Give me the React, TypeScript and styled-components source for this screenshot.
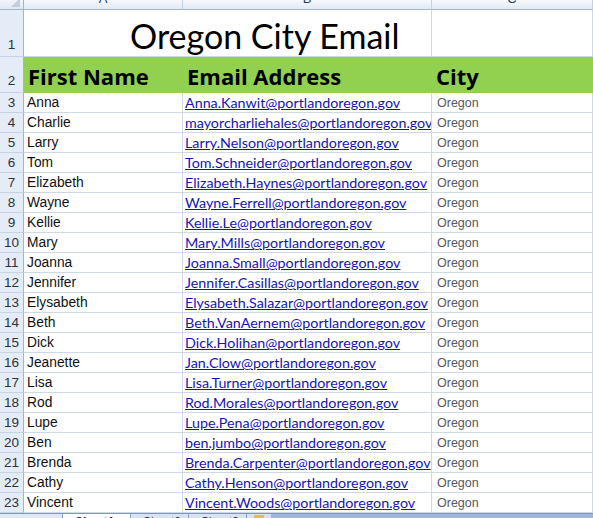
import React from 'react';
import styled, { createGlobalStyle } from 'styled-components';

const GlobalStyle = createGlobalStyle`
  html, body {
    margin: 0;
    padding: 0;
    background: #ffffff;
    overflow: hidden;
  }
`;

const rows: { name: string; email: string }[] = [
  { name: 'Anna', email: 'Anna.Kanwit@portlandoregon.gov' },
  { name: 'Charlie', email: 'mayorcharliehales@portlandoregon.gov' },
  { name: 'Larry', email: 'Larry.Nelson@portlandoregon.gov' },
  { name: 'Tom', email: 'Tom.Schneider@portlandoregon.gov' },
  { name: 'Elizabeth', email: 'Elizabeth.Haynes@portlandoregon.gov' },
  { name: 'Wayne', email: 'Wayne.Ferrell@portlandoregon.gov' },
  { name: 'Kellie', email: 'Kellie.Le@portlandoregon.gov' },
  { name: 'Mary', email: 'Mary.Mills@portlandoregon.gov' },
  { name: 'Joanna', email: 'Joanna.Small@portlandoregon.gov' },
  { name: 'Jennifer', email: 'Jennifer.Casillas@portlandoregon.gov' },
  { name: 'Elysabeth', email: 'Elysabeth.Salazar@portlandoregon.gov' },
  { name: 'Beth', email: 'Beth.VanAernem@portlandoregon.gov' },
  { name: 'Dick', email: 'Dick.Holihan@portlandoregon.gov' },
  { name: 'Jeanette', email: 'Jan.Clow@portlandoregon.gov' },
  { name: 'Lisa', email: 'Lisa.Turner@portlandoregon.gov' },
  { name: 'Rod', email: 'Rod.Morales@portlandoregon.gov' },
  { name: 'Lupe', email: 'Lupe.Pena@portlandoregon.gov' },
  { name: 'Ben', email: 'ben.jumbo@portlandoregon.gov' },
  { name: 'Brenda', email: 'Brenda.Carpenter@portlandoregon.gov' },
  { name: 'Cathy', email: 'Cathy.Henson@portlandoregon.gov' },
  { name: 'Vincent', email: 'Vincent.Woods@portlandoregon.gov' },
];

const Workbook = styled.div`
  width: 593px;
  height: 518px;
  display: flex;
  flex-direction: column;
  overflow: hidden;
`;

const Sheet = styled.div`
  display: grid;
  grid-template-columns: 24px 159px 249px 1fr;
  grid-template-rows: 10px 47px 36px repeat(21, 20px);
`;

const Corner = styled.div`
  position: relative;
  background: linear-gradient(#f3f6fa, #dfe7f1);
  border-right: 1px solid #9eb6ce;
  border-bottom: 1px solid #9eb6ce;
  box-sizing: border-box;
  overflow: hidden;

  &::after {
    content: '';
    position: absolute;
    right: 3px;
    bottom: 2px;
    border-left: 9px solid transparent;
    border-bottom: 9px solid #c4cfdd;
  }
`;

const ColHead = styled.div`
  background: linear-gradient(#f7f9fc, #e2e9f2);
  border-right: 1px solid #c5d2e2;
  border-bottom: 1px solid #9eb6ce;
  box-sizing: border-box;
  overflow: hidden;
  font-family: 'Liberation Sans', Arial, sans-serif;
  font-size: 13px;
  color: #27415f;
  text-align: center;
  line-height: 18px;

  span {
    display: block;
    margin-top: -10px;
  }
`;

const RowNum = styled.div<{ $bottom?: boolean }>`
  background: #e4ecf7;
  border-right: 1px solid #9eb6ce;
  border-bottom: 1px solid #c5d3e4;
  box-sizing: border-box;
  display: flex;
  justify-content: center;
  align-items: ${p => (p.$bottom ? 'flex-end' : 'center')};
  padding-bottom: ${p => (p.$bottom ? '4px' : '0')};
  font-family: 'Liberation Sans', Arial, sans-serif;
  font-size: 13.5px;
  color: #2b3340;
`;

const Cell = styled.div<{ $fill?: string; $span?: number }>`
  grid-column: span ${p => p.$span ?? 1};
  background: ${p => p.$fill ?? '#ffffff'};
  border-right: 1px solid ${p => p.$fill ?? '#d0d7e5'};
  border-bottom: 1px solid ${p => p.$fill ?? '#d0d7e5'};
  box-sizing: border-box;
  display: flex;
  align-items: center;
  overflow: hidden;
  white-space: nowrap;
  padding-left: 3px;
`;

const Title = styled.div`
  padding-left: 103px;
  padding-top: 4px;
  font-family: Lato, 'Open Sans', sans-serif;
  font-size: 34px;
  color: #000000;
`;

const HeaderText = styled.div`
  padding-left: 1px;
  padding-top: 3px;
  font-family: 'Open Sans', Lato, sans-serif;
  font-weight: 700;
  font-size: 22px;
  color: #000000;
`;

const Name = styled.span`
  font-family: 'Liberation Sans', Arial, sans-serif;
  font-size: 13.8px;
  color: #111111;
`;

const Email = styled.span`
  font-family: Lato, 'Open Sans', sans-serif;
  font-size: 14.3px;
  color: #1515b4;
  text-decoration: underline;
  margin-left: -1px;
`;

const City = styled.span`
  font-family: 'Liberation Sans', Arial, sans-serif;
  font-size: 12.5px;
  color: #555a60;
  padding-left: 2px;
`;

const TabStrip = styled.div`
  height: 5px;
  display: flex;
  overflow: hidden;
  background: #9fb6d6;
  border-top: 1px solid #7d97bd;
  box-sizing: border-box;
`;

const NavButtons = styled.div`
  width: 58px;
  display: flex;
  gap: 4px;
  padding: 1px 0 0 4px;
  background: #dfe8f4;
  font-family: 'Liberation Sans', Arial, sans-serif;
  font-size: 11px;
  color: #2a3f5f;
  line-height: 12px;
`;

const SheetTab = styled.div<{ $active?: boolean }>`
  width: ${p => (p.$active ? '68px' : '58px')};
  background: ${p => (p.$active ? '#ffffff' : '#d8e3f1')};
  border-left: 1px solid #8aa2c4;
  padding: 1px 0 0 12px;
  box-sizing: border-box;
  font-family: 'Liberation Sans', Arial, sans-serif;
  font-size: 12px;
  font-weight: ${p => (p.$active ? 700 : 400)};
  color: #1e2d44;
  line-height: 14px;
`;

const NewSheet = styled.div`
  width: 24px;
  background: #d8e3f1;
  border-left: 1px solid #8aa2c4;
  display: flex;
  justify-content: center;
  padding-top: 1px;

  &::before {
    content: '';
    width: 10px;
    height: 8px;
    background: #e9b84a;
    border-radius: 1px;
  }
`;

export default function App() {
  return (
    <Workbook>
      <GlobalStyle />
      <Sheet>
        <Corner />
        <ColHead><span>A</span></ColHead>
        <ColHead><span>B</span></ColHead>
        <ColHead><span>C</span></ColHead>

        <RowNum $bottom>1</RowNum>
        <Cell $span={2}>
          <Title>Oregon City Email</Title>
        </Cell>
        <Cell />

        <RowNum $bottom>2</RowNum>
        <Cell $fill="#92d050">
          <HeaderText>First Name</HeaderText>
        </Cell>
        <Cell $fill="#92d050">
          <HeaderText>Email Address</HeaderText>
        </Cell>
        <Cell $fill="#92d050">
          <HeaderText>City</HeaderText>
        </Cell>

        {rows.map((r, i) => (
          <React.Fragment key={r.email}>
            <RowNum>{i + 3}</RowNum>
            <Cell>
              <Name>{r.name}</Name>
            </Cell>
            <Cell>
              <Email>{r.email}</Email>
            </Cell>
            <Cell>
              <City>Oregon</City>
            </Cell>
          </React.Fragment>
        ))}
      </Sheet>
      <TabStrip>
        <NavButtons>
          <span>⏮</span>
          <span>◀</span>
          <span>▶</span>
          <span>⏭</span>
        </NavButtons>
        <SheetTab $active>Sheet1</SheetTab>
        <SheetTab>Sheet2</SheetTab>
        <SheetTab>Sheet3</SheetTab>
        <NewSheet />
      </TabStrip>
    </Workbook>
  );
}
